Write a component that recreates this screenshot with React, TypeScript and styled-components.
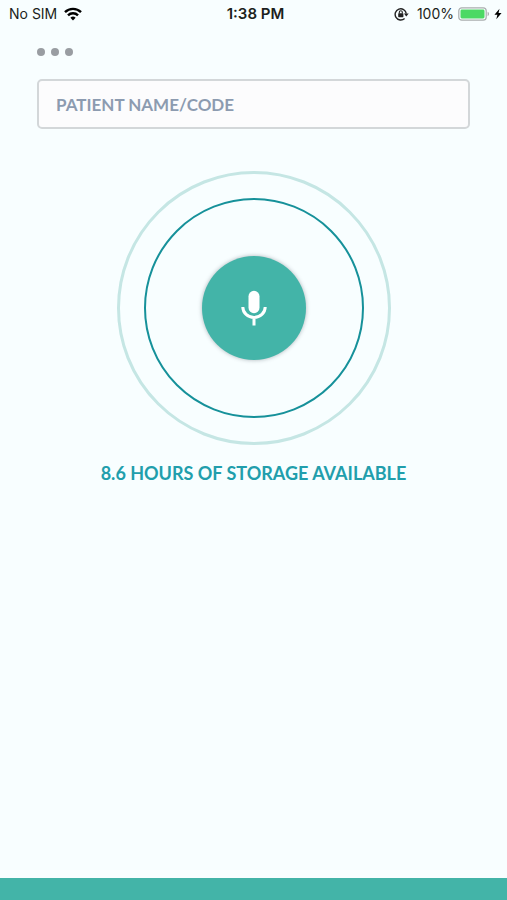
import React, { useState } from "react";
import styled, { createGlobalStyle } from "styled-components";

const GlobalStyle = createGlobalStyle`
  *, *::before, *::after { box-sizing: border-box; }
  body {
    margin: 0;
    background: #f8feff;
    font-family: Lato, "Open Sans", sans-serif;
  }
`;

const Screen = styled.div`
  display: flex;
  flex-direction: column;
  min-height: 100vh;
  background: #f8feff;
`;

const StatusBar = styled.header`
  display: grid;
  grid-template-columns: 1fr auto 1fr;
  align-items: center;
  height: 28px;
  padding: 0 5px 0 9px;
  font-family: Inter, Roboto, sans-serif;
  font-size: 14px;
  line-height: 20px;
  color: #1c1f20;
  white-space: nowrap;
`;

const StatusGroup = styled.div<{ $align: "start" | "end" }>`
  display: flex;
  align-items: center;
  justify-content: flex-${(p) => p.$align};
  gap: ${(p) => (p.$align === "start" ? 7 : 4)}px;
`;

const Time = styled.time`
  font-size: 15px;
  font-weight: 600;
`;

const LockIcon = styled.svg`
  margin-right: 4px;
`;

const Content = styled.main`
  display: flex;
  flex: 1;
  flex-direction: column;
  align-items: center;
  padding: 16px 37px 0;
`;

const MenuButton = styled.button`
  display: flex;
  align-self: flex-start;
  gap: 6px;
  padding: 4px 0;
  border: 0;
  background: none;
  cursor: pointer;
`;

const Dot = styled.span`
  width: 8px;
  height: 8px;
  border-radius: 50%;
  background: #999da2;
`;

const PatientInput = styled.input`
  width: 100%;
  height: 50px;
  margin-top: 19px;
  padding: 0 17px;
  border: 2px solid #d3d7d9;
  border-radius: 5px;
  background: #fcfcfd;
  color: #8c9bb0;
  font-family: inherit;
  font-size: 17px;
  font-weight: 700;

  &::placeholder {
    color: #8c9bb0;
    opacity: 1;
  }
`;

const OuterRing = styled.div`
  display: grid;
  place-items: center;
  width: 274px;
  height: 274px;
  margin-top: 42px;
  border: 3px solid #c5e6e4;
  border-radius: 50%;
`;

const InnerRing = styled.div`
  display: grid;
  place-items: center;
  width: 220px;
  height: 220px;
  border: 2px solid #16919a;
  border-radius: 50%;
`;

const RecordButton = styled.button`
  display: grid;
  place-items: center;
  width: 104px;
  height: 104px;
  padding: 0;
  border: 0;
  border-radius: 50%;
  background: #43b4a8;
  box-shadow: 0 0 4px rgba(60, 70, 80, 0.4);
  cursor: pointer;
`;

const StorageText = styled.p`
  margin: 16px 0 0;
  color: #219eac;
  font-size: 18px;
  font-weight: 700;
  line-height: 24px;
  text-align: center;
`;

const BottomBar = styled.footer`
  height: 22px;
  background: #43b4a8;
`;

export default function App() {
  const [patient, setPatient] = useState("");

  return (
    <>
      <GlobalStyle />
      <Screen>
        <StatusBar>
          <StatusGroup $align="start">
            <span>No SIM</span>
            <svg width="18" height="14" viewBox="0 0 18 14" fill="none" stroke="#000" strokeWidth="2.4" aria-hidden="true">
              <path d="M1 5.2a11.3 11.3 0 0 1 16 0" />
              <path d="M4 8.4a7 7 0 0 1 10 0" />
              <path d="M6.4 10.7a3.7 3.7 0 0 1 5.2 0L9 13.4z" fill="#000" stroke="none" />
            </svg>
          </StatusGroup>
          <Time>1:38 PM</Time>
          <StatusGroup $align="end">
            <LockIcon width="15" height="14" viewBox="0 0 15 14" fill="none" stroke="#222" aria-hidden="true">
              <path d="M10.6 11.5A5.6 5.6 0 1 1 12.3 6.6" strokeWidth="1.4" />
              <path d="M9.9 6.4h4.8l-2.4 3.2z" fill="#222" stroke="none" />
              <rect x="4.2" y="6.2" width="5.2" height="4" rx="0.6" fill="#222" stroke="none" />
              <path d="M5.3 6.4V5.2a1.5 1.5 0 0 1 3 0v1.2" strokeWidth="1.1" />
            </LockIcon>
            <span>100%</span>
            <svg width="32" height="14" viewBox="0 0 32 14" aria-hidden="true">
              <rect x="0.8" y="0.8" width="27.4" height="12.4" rx="3" fill="#f8feff" stroke="#a9adae" strokeWidth="1.2" />
              <rect x="2.5" y="2.5" width="24" height="9" rx="1.4" fill="#4bd964" />
              <path d="M29.6 4.8a2.4 2.4 0 0 1 0 4.4z" fill="#a9adae" />
            </svg>
            <svg width="8" height="12" viewBox="0 0 9 12" aria-hidden="true">
              <path d="M6.2 0 .5 6.8h3.3L2.6 12l5.9-7.1H5.1z" fill="#000" />
            </svg>
          </StatusGroup>
        </StatusBar>
        <Content>
          <MenuButton type="button" aria-label="Menu">
            <Dot />
            <Dot />
            <Dot />
          </MenuButton>
          <PatientInput
            type="text"
            aria-label="Patient name or code"
            placeholder="PATIENT NAME/CODE"
            value={patient}
            onChange={(e) => setPatient(e.target.value)}
          />
          <OuterRing>
            <InnerRing>
              <RecordButton type="button" aria-label="Record">
                <svg width="28" height="36" viewBox="0 0 28 36" fill="none" aria-hidden="true">
                  <rect x="8.5" y="0.8" width="11" height="22.4" rx="5.5" fill="#fff" />
                  <path d="M2.8 17a11.2 10.5 0 0 0 22.4 0M14 27.5V35.5" stroke="#fff" strokeWidth="3" />
                </svg>
              </RecordButton>
            </InnerRing>
          </OuterRing>
          <StorageText>8.6 HOURS OF STORAGE AVAILABLE</StorageText>
        </Content>
        <BottomBar />
      </Screen>
    </>
  );
}
